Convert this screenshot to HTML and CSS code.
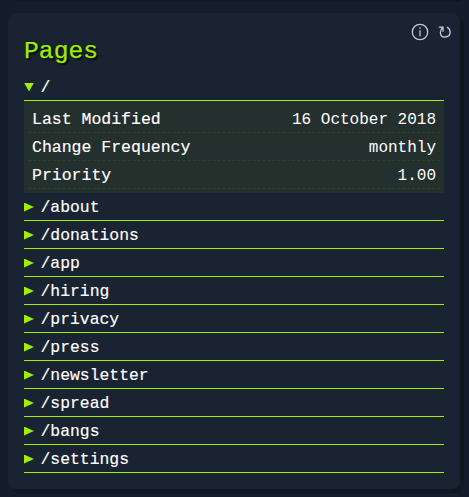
FILE: index.html
```html
<!DOCTYPE html>
<html lang="en">
<head>
<meta charset="utf-8">
<title>Pages</title>
<link rel="stylesheet" href="styles.css">
</head>
<body>
<div class="previous"></div>
<main class="card">
  <div class="actions">
    <svg class="info" viewBox="0 0 18 18"><circle cx="9" cy="9" r="7.7"/><path d="M9 7.2V13.3M9 4.2V5.8"/></svg>
    <svg class="refresh" viewBox="0 0 14 14"><path d="M0.8 2.2H5V6.8M4.7 2.5C3 4 2.4 5.6 2.4 7.4C2.4 10.3 4.4 12 7 12C9.9 12 12.1 10.2 12.1 7.3C12.1 4.9 11 3.2 9 2.2"/></svg>
  </div>
  <h1>Pages</h1>
  <section>
    <div class="row open"><i class="arrow"></i>/</div>
    <dl class="details">
      <div><dt>Last Modified</dt><dd>16 October 2018</dd></div>
      <div><dt>Change Frequency</dt><dd>monthly</dd></div>
      <div><dt>Priority</dt><dd>1.00</dd></div>
    </dl>
    <div class="row"><i class="arrow"></i>/about</div>
    <div class="row"><i class="arrow"></i>/donations</div>
    <div class="row"><i class="arrow"></i>/app</div>
    <div class="row"><i class="arrow"></i>/hiring</div>
    <div class="row"><i class="arrow"></i>/privacy</div>
    <div class="row"><i class="arrow"></i>/press</div>
    <div class="row"><i class="arrow"></i>/newsletter</div>
    <div class="row"><i class="arrow"></i>/spread</div>
    <div class="row"><i class="arrow"></i>/bangs</div>
    <div class="row"><i class="arrow"></i>/settings</div>
  </section>
</main>
</body>
</html>
```
FILE: styles.css
```css
* { box-sizing: border-box; }
body {
  margin: 0;
  height: 497px;
  overflow: hidden;
  background: #141d2b;
  color: #fff;
  font-family: "Liberation Mono", monospace;
  font-size: 16px;
}
.previous {
  height: 1px;
  margin: 0 8px 12px 16px;
  background: #10171f;
}
.card {
  position: relative;
  width: 452px;
  height: 476px;
  margin-left: 8px;
  padding: 23px 16px 0;
  border-radius: 8px;
  background: #1a2332;
  box-shadow: 4px 4px 0 #101820;
}
.actions {
  position: absolute;
  top: 10px;
  right: 8px;
  display: flex;
  align-items: center;
  gap: 9px;
}
.actions svg {
  fill: none;
  stroke: #c5c8cd;
  stroke-width: 1.3;
}
.info { width: 18px; height: 18px; }
.refresh { width: 14px; height: 14px; stroke-width: 1.5; }
h1 {
  margin: 0 0 7px;
  height: 30px;
  line-height: 30px;
  font-size: 24.7px;
  font-weight: 400;
  color: #9fef00;
  -webkit-text-stroke: 0.25px #9fef00;
  text-shadow: 1px 1px 2px #05080c, 2px 2px 1px #0b111a;
}
.row {
  display: flex;
  align-items: center;
  height: 28px;
  padding-top: 1px;
  border-bottom: 1px solid #9fef00;
  font-size: 16.4px;
  -webkit-text-stroke: 0.15px #fff;
}
.arrow {
  width: 10px;
  height: 9px;
  margin-right: 6.5px;
  background: #9fef00;
  clip-path: polygon(0 0, 100% 50%, 0 100%);
}
.open .arrow { clip-path: polygon(0 0, 100% 0, 50% 100%); }
.details {
  margin: 0;
  padding: 4px;
  background: #24302e;
}
.details div {
  display: flex;
  justify-content: space-between;
  height: 28px;
  padding: 1px 4px 0;
  border-bottom: 1px dashed #2e431f;
  line-height: 28px;
}
dt {
  font-size: 16.5px;
  -webkit-text-stroke: 0.15px #fff;
}
dd { margin: 0; }
```
